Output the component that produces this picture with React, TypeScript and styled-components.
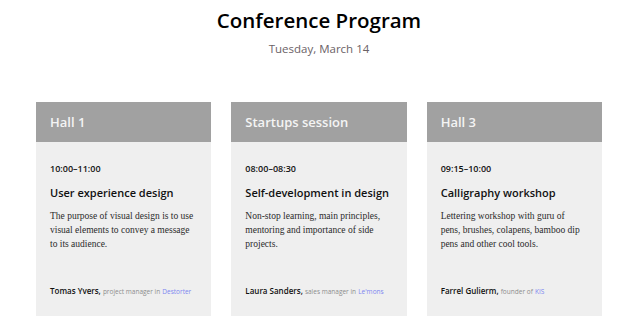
import styled, { createGlobalStyle } from "styled-components";

const GlobalStyle = createGlobalStyle`
  html, body {
    margin: 0;
    padding: 0;
    background: #ffffff;
  }
  body {
    font-family: "Open Sans", "Liberation Sans", sans-serif;
    color: #111;
  }
`;

const Page = styled.div`
  width: 640px;
  height: 330px;
  box-sizing: border-box;
  padding: 5px 38px 0 36px;
  display: flex;
  flex-direction: column;
  align-items: center;
`;

const Title = styled.h1`
  margin: 0;
  font-size: 20.5px;
  font-weight: 600;
  line-height: 30px;
  color: #000;
`;

const Date = styled.div`
  margin-top: 6px;
  font-size: 11.5px;
  line-height: 16px;
  color: #6b6266;
`;

const Grid = styled.div`
  margin-top: 45px;
  width: 100%;
  display: grid;
  grid-template-columns: repeat(3, 1fr);
  gap: 20px;
`;

const Card = styled.div`
  background: #efefef;
  height: 214px;
  display: flex;
  flex-direction: column;
`;

const Header = styled.div`
  background: #a1a1a1;
  height: 40px;
  padding: 0 14px;
  display: flex;
  align-items: center;
  color: #f4f4f4;
  font-size: 13px;
  font-weight: 600;
`;

const Body = styled.div`
  flex: 1;
  padding: 20px 14px 17px;
  display: flex;
  flex-direction: column;
`;

const Time = styled.div`
  font-size: 9px;
  font-weight: 600;
  line-height: 14px;
`;

const Talk = styled.div`
  margin-top: 8px;
  font-size: 11px;
  font-weight: 600;
  line-height: 18px;
  white-space: nowrap;
`;

const Desc = styled.p`
  margin: 7px 0 0;
  padding-right: 4px;
  font-family: "Liberation Serif", Georgia, serif;
  font-size: 9.5px;
  line-height: 14px;
  color: #2a2a2a;
`;

const Footer = styled.div`
  margin-top: auto;
  font-size: 8px;
  line-height: 14px;
  white-space: nowrap;
`;

const Name = styled.span`
  font-weight: 600;
  color: #111;
`;

const Role = styled.span`
  font-size: 6.5px;
  color: #8d8d8d;
`;

const Company = styled.span`
  font-size: 6.5px;
  color: #7d86f0;
`;

const sessions = [
  {
    hall: "Hall 1",
    time: "10:00–11:00",
    title: "User experience design",
    desc: "The purpose of visual design is to use visual elements to convey a message to its audience.",
    name: "Tomas Yvers,",
    role: "project manager in",
    company: "Destorter",
  },
  {
    hall: "Startups session",
    time: "08:00–08:30",
    title: "Self-development in design",
    desc: "Non-stop learning, main principles, mentoring and importance of side projects.",
    name: "Laura Sanders,",
    role: "sales manager in",
    company: "Le'mons",
  },
  {
    hall: "Hall 3",
    time: "09:15–10:00",
    title: "Calligraphy workshop",
    desc: "Lettering workshop with guru of pens, brushes, colapens, bamboo dip pens and other cool tools.",
    name: "Farrel Gulierm,",
    role: "founder of",
    company: "KIS",
  },
];

export default function App() {
  return (
    <>
      <GlobalStyle />
      <Page>
        <Title>Conference Program</Title>
        <Date>Tuesday, March 14</Date>
        <Grid>
          {sessions.map((s) => (
            <Card key={s.hall}>
              <Header>{s.hall}</Header>
              <Body>
                <Time>{s.time}</Time>
                <Talk>{s.title}</Talk>
                <Desc>{s.desc}</Desc>
                <Footer>
                  <Name>{s.name}</Name> <Role>{s.role}</Role>{" "}
                  <Company>{s.company}</Company>
                </Footer>
              </Body>
            </Card>
          ))}
        </Grid>
      </Page>
    </>
  );
}
